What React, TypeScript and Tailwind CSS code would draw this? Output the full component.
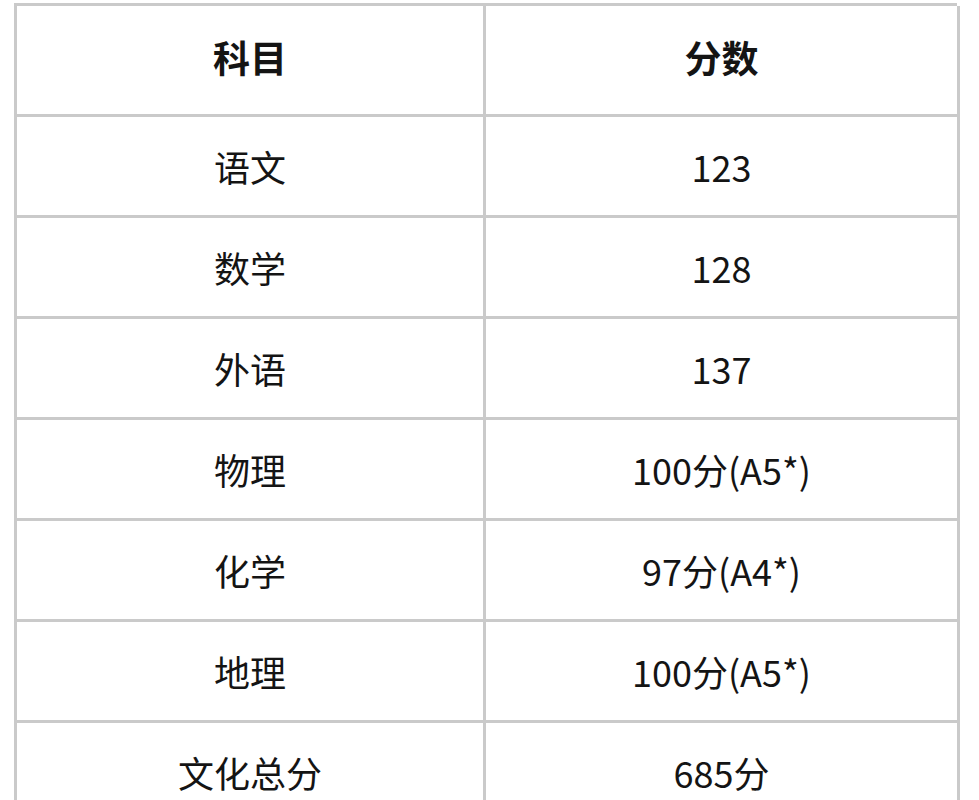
const rows: [string, string][] = [
  ['语文', '123'],
  ['数学', '128'],
  ['外语', '137'],
  ['物理', '100分(A5*)'],
  ['化学', '97分(A4*)'],
  ['地理', '100分(A5*)'],
  ['文化总分', '685分'],
]

const font = { fontFamily: '"Noto Sans CJK SC", "Noto Sans", sans-serif' }

export default function App() {
  return (
    <div className="min-h-screen bg-white pt-[3px] pl-[14px] text-[#141414]" style={font}>
      <div className="grid w-[943px] grid-cols-[469px_474px] border-l-[3px] border-t-[3px] border-[#cacaca]">
        <div className="flex h-[111px] items-center justify-center border-b-[3px] border-r-[3px] border-[#cacaca] pb-[4px] text-[37px] font-bold">
          科目
        </div>
        <div className="flex h-[111px] items-center justify-center border-b-[3px] border-r-[3px] border-[#cacaca] pb-[4px] text-[37px] font-bold">
          分数
        </div>
        {rows.map(([name, score]) => (
          <div key={name} className="contents">
            <div className="flex h-[101px] items-center justify-center border-b-[3px] border-r-[3px] border-[#cacaca] text-[36px]">
              {name}
            </div>
            <div className="flex h-[101px] items-center justify-center border-b-[3px] border-r-[3px] border-[#cacaca] text-[36px]">
              {score}
            </div>
          </div>
        ))}
      </div>
    </div>
  )
}
